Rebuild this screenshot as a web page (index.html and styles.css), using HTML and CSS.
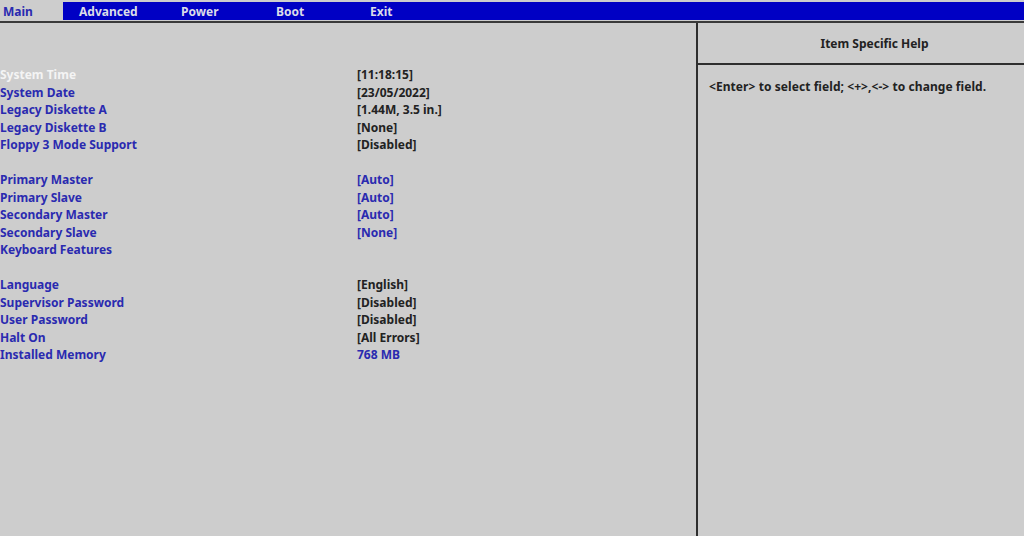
FILE: index.html
```html
<!DOCTYPE html>
<html>
<head>
<meta charset="utf-8">
<link rel="stylesheet" href="styles.css">
</head>
<body>
<div class="screen">
  <div class="menubar">
    <div class="tab active">Main</div>
    <div class="tabs">
      <div class="tab t-adv">Advanced</div>
      <div class="tab t-pow">Power</div>
      <div class="tab t-boot">Boot</div>
      <div class="tab t-exit">Exit</div>
    </div>
  </div>
  <div class="content">
    <div class="main">
      <div class="row"><span class="label sel">System Time</span><span class="val">[11:18:15]</span></div>
      <div class="row"><span class="label">System Date</span><span class="val">[23/05/2022]</span></div>
      <div class="row"><span class="label">Legacy Diskette A</span><span class="val">[1.44M, 3.5 in.]</span></div>
      <div class="row"><span class="label">Legacy Diskette B</span><span class="val">[None]</span></div>
      <div class="row"><span class="label">Floppy 3 Mode Support</span><span class="val">[Disabled]</span></div>
      <div class="row"></div>
      <div class="row"><span class="label">Primary Master</span><span class="val blue">[Auto]</span></div>
      <div class="row"><span class="label">Primary Slave</span><span class="val blue">[Auto]</span></div>
      <div class="row"><span class="label">Secondary Master</span><span class="val blue">[Auto]</span></div>
      <div class="row"><span class="label">Secondary Slave</span><span class="val blue">[None]</span></div>
      <div class="row"><span class="label">Keyboard Features</span></div>
      <div class="row"></div>
      <div class="row"><span class="label">Language</span><span class="val">[English]</span></div>
      <div class="row"><span class="label">Supervisor Password</span><span class="val">[Disabled]</span></div>
      <div class="row"><span class="label">User Password</span><span class="val">[Disabled]</span></div>
      <div class="row"><span class="label">Halt On</span><span class="val">[All Errors]</span></div>
      <div class="row"><span class="label">Installed Memory</span><span class="val blue">768 MB</span></div>
    </div>
    <div class="help">
      <div class="help-head">Item Specific Help</div>
      <div class="help-body">&lt;Enter&gt; to select field; &lt;+&gt;,&lt;-&gt; to change field.</div>
    </div>
  </div>
</div>
</body>
</html>
```

FILE: styles.css
```css
html, body {
  margin: 0;
  padding: 0;
  background: #cdcdcd;
}
.screen {
  width: 1024px;
  height: 536px;
  overflow: hidden;
  font-family: "Noto Sans", "Open Sans", sans-serif;
  font-weight: 700;
  font-size: 12px;
  display: flex;
  flex-direction: column;
  background: #cdcdcd;
}
.menubar {
  height: 21px;
  display: flex;
  border-bottom: 2px solid #3a3a3a;
  box-sizing: content-box;
}
.tab {
  line-height: 20px;
  color: #dcdce8;
}
.tab.active {
  width: 60px;
  padding-left: 3px;
  color: #2a2ab0;
  margin-top: 2px;
}
.tabs {
  flex: 1;
  display: flex;
  background: #0000c4;
  margin-top: 2px;
  height: 18px;
  padding-left: 16px;
}
.t-adv { width: 102px; }
.t-pow { width: 95px; }
.t-boot { width: 94px; }
.content {
  flex: 1;
  display: flex;
}
.main {
  width: 696px;
  padding-top: 43px;
}
.row {
  height: 17.5px;
  line-height: 17.5px;
  display: flex;
  white-space: nowrap;
}
.label {
  width: 357px;
  color: #2a2ab0;
}
.label.sel {
  color: #f4f4f4;
}
.val {
  color: #222;
}
.val.blue {
  color: #2a2ab0;
}
.help {
  flex: 1;
  border-left: 2px solid #2e2e2e;
  display: flex;
  flex-direction: column;
}
.help-head {
  height: 40px;
  line-height: 42px;
  border-bottom: 2px solid #2e2e2e;
  color: #222;
  text-align: center;
  padding-left: 27px;
}
.help-body {
  padding: 13px 0 0 11px;
  color: #222;
  line-height: 17px;
  letter-spacing: 0.07px;
}
```
